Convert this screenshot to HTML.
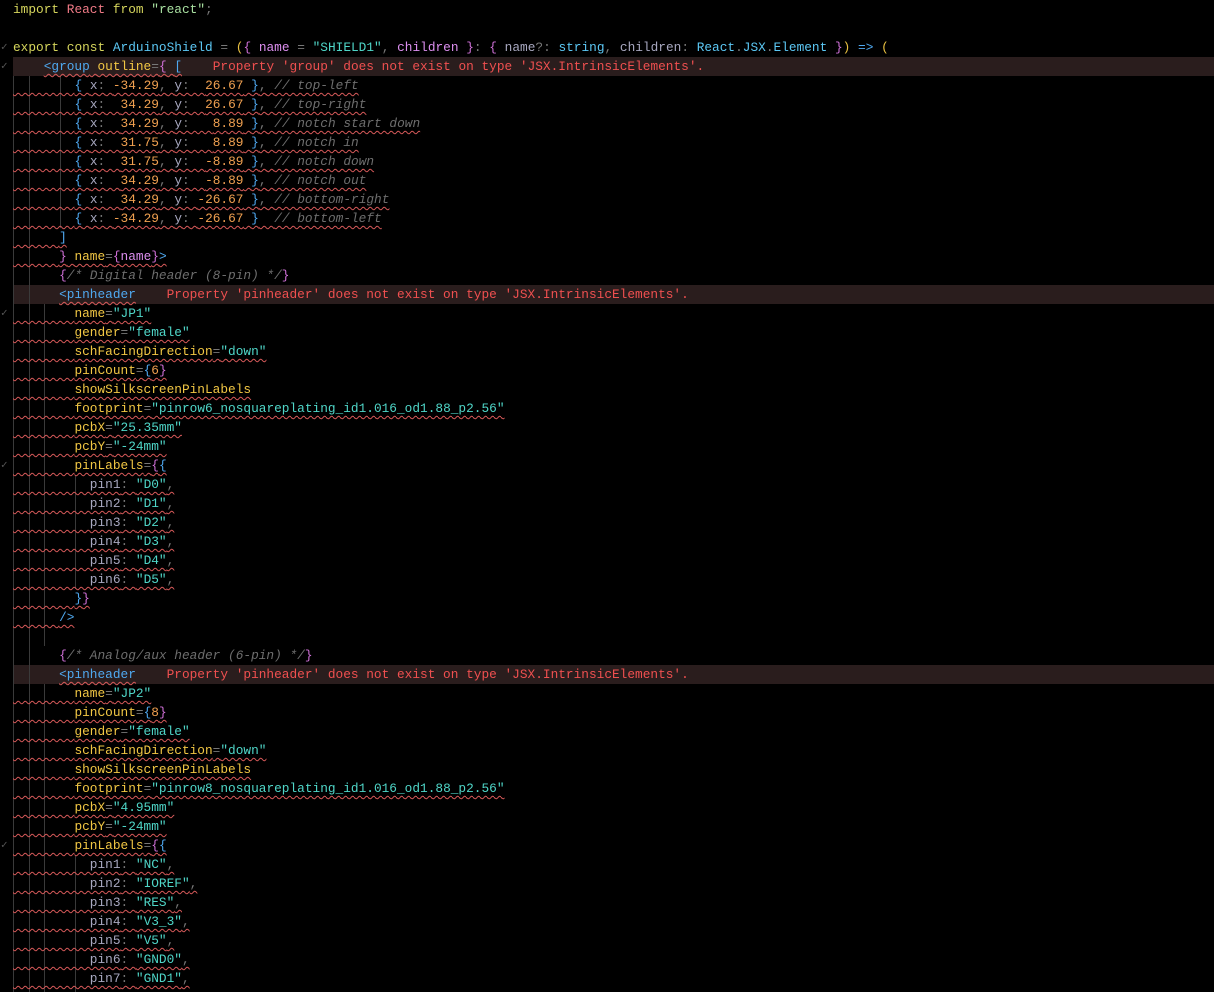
<!DOCTYPE html>
<html><head><meta charset="utf-8"><style>
html,body{margin:0;padding:0;background:#000;width:1214px;height:992px;overflow:hidden}
#ed{position:relative;width:1214px;height:992px;font-family:"Liberation Mono",monospace;font-size:12.8px;color:#d4d4d4}
.l{position:absolute;left:0;width:1214px;height:19px;line-height:20px;white-space:pre}
.l .c{position:absolute;left:13px;top:0}
.eb{position:absolute;left:13px;width:1201px;height:19px;background:#2a1d1d}
.g{position:absolute;width:1px;background:#3a3a3a}
.ck{position:absolute;left:1px;color:#555;font-size:11px}
.sq{text-decoration:underline wavy #d85a5a;text-decoration-thickness:1px;text-underline-offset:3px;text-decoration-skip-ink:none}
.k{color:#d6d65c}.r{color:#f07a86}.s{color:#4fd6c8}.s2{color:#a8e0a0}.f{color:#5cc8f5}
.p{color:#777}.y{color:#e8c040}.m{color:#d070d8}.b{color:#4fa8f0}.pa{color:#dd8ff0}
.t{color:#4fa8ef}.a{color:#f2c744}.x{color:#a8a8c0}.n{color:#f0a050}.cm{color:#6e6e6e;font-style:italic}
.e{color:#f05050}.w{color:#d4d4d4}.ty{color:#4ec9b0}
</style></head><body><div id="ed">
<div class="eb" style="top:57px"></div>
<div class="eb" style="top:285px"></div>
<div class="eb" style="top:665px"></div>
<div class="g" style="left:13px;top:76px;height:916px"></div>
<div class="g" style="left:29px;top:76px;height:916px"></div>
<div class="g" style="left:44px;top:304px;height:342px"></div>
<div class="g" style="left:44px;top:684px;height:308px"></div>
<div class="g" style="left:60px;top:76px;height:152px"></div>
<div class="g" style="left:75px;top:475px;height:114px"></div>
<div class="g" style="left:75px;top:855px;height:137px"></div>

<div class="l" style="top:0"><span class="c"><span class="k">import</span> <span class="r">React</span> <span class="k">from</span> <span class="s2">"react"</span><span class="p">;</span></span></div>
<div class="l" style="top:38px"><span class="ck">✓</span><span class="c"><span class="k">export</span> <span class="k">const</span> <span class="f">ArduinoShield</span> <span class="p">=</span> <span class="y">(</span><span class="m">{</span> <span class="pa">name</span> <span class="p">=</span> <span class="s">"SHIELD1"</span><span class="p">,</span> <span class="pa">children</span> <span class="m">}</span><span class="p">:</span> <span class="m">{</span> <span class="x">name</span><span class="p">?:</span> <span class="f">string</span><span class="p">,</span> <span class="x">children</span><span class="p">:</span> <span class="f">React</span><span class="p">.</span><span class="f">JSX</span><span class="p">.</span><span class="f">Element</span> <span class="m">}</span><span class="y">)</span> <span class="b">=&gt;</span> <span class="y">(</span></span></div>
<div class="l" style="top:57px"><span class="ck">✓</span><span class="c">    <span class="sq"><span class="t">&lt;group</span> <span class="a">outline</span><span class="p">=</span><span class="m">{</span> <span class="b">[</span></span>    <span class="e">Property 'group' does not exist on type 'JSX.IntrinsicElements'.</span></span></div>
<div class="l" style="top:76px"><span class="c sq">        <span class="b">{</span> <span class="x">x</span><span class="p">:</span> <span class="n">-34.29</span><span class="p">,</span> <span class="x">y</span><span class="p">:</span>  <span class="n">26.67</span> <span class="b">}</span><span class="p">,</span> <span class="cm">// top-left</span></span></div>
<div class="l" style="top:95px"><span class="c sq">        <span class="b">{</span> <span class="x">x</span><span class="p">:</span>  <span class="n">34.29</span><span class="p">,</span> <span class="x">y</span><span class="p">:</span>  <span class="n">26.67</span> <span class="b">}</span><span class="p">,</span> <span class="cm">// top-right</span></span></div>
<div class="l" style="top:114px"><span class="c sq">        <span class="b">{</span> <span class="x">x</span><span class="p">:</span>  <span class="n">34.29</span><span class="p">,</span> <span class="x">y</span><span class="p">:</span>   <span class="n">8.89</span> <span class="b">}</span><span class="p">,</span> <span class="cm">// notch start down</span></span></div>
<div class="l" style="top:133px"><span class="c sq">        <span class="b">{</span> <span class="x">x</span><span class="p">:</span>  <span class="n">31.75</span><span class="p">,</span> <span class="x">y</span><span class="p">:</span>   <span class="n">8.89</span> <span class="b">}</span><span class="p">,</span> <span class="cm">// notch in</span></span></div>
<div class="l" style="top:152px"><span class="c sq">        <span class="b">{</span> <span class="x">x</span><span class="p">:</span>  <span class="n">31.75</span><span class="p">,</span> <span class="x">y</span><span class="p">:</span>  <span class="n">-8.89</span> <span class="b">}</span><span class="p">,</span> <span class="cm">// notch down</span></span></div>
<div class="l" style="top:171px"><span class="c sq">        <span class="b">{</span> <span class="x">x</span><span class="p">:</span>  <span class="n">34.29</span><span class="p">,</span> <span class="x">y</span><span class="p">:</span>  <span class="n">-8.89</span> <span class="b">}</span><span class="p">,</span> <span class="cm">// notch out</span></span></div>
<div class="l" style="top:190px"><span class="c sq">        <span class="b">{</span> <span class="x">x</span><span class="p">:</span>  <span class="n">34.29</span><span class="p">,</span> <span class="x">y</span><span class="p">:</span> <span class="n">-26.67</span> <span class="b">}</span><span class="p">,</span> <span class="cm">// bottom-right</span></span></div>
<div class="l" style="top:209px"><span class="c sq">        <span class="b">{</span> <span class="x">x</span><span class="p">:</span> <span class="n">-34.29</span><span class="p">,</span> <span class="x">y</span><span class="p">:</span> <span class="n">-26.67</span> <span class="b">}</span>  <span class="cm">// bottom-left</span></span></div>
<div class="l" style="top:228px"><span class="c sq">      <span class="b">]</span></span></div>
<div class="l" style="top:247px"><span class="c sq">      <span class="m">}</span> <span class="a">name</span><span class="p">=</span><span class="m">{</span><span class="pa">name</span><span class="m">}</span><span class="t">&gt;</span></span></div>
<div class="l" style="top:266px"><span class="c">      <span class="m">{</span><span class="cm">/* Digital header (8-pin) */</span><span class="m">}</span></span></div>
<div class="l" style="top:285px"><span class="c">      <span class="sq"><span class="t">&lt;pinheader</span></span>    <span class="e">Property 'pinheader' does not exist on type 'JSX.IntrinsicElements'.</span></span></div>
<div class="l" style="top:304px"><span class="ck">✓</span><span class="c sq">        <span class="a">name</span><span class="p">=</span><span class="s">"JP1"</span></span></div>
<div class="l" style="top:323px"><span class="c sq">        <span class="a">gender</span><span class="p">=</span><span class="s">"female"</span></span></div>
<div class="l" style="top:342px"><span class="c sq">        <span class="a">schFacingDirection</span><span class="p">=</span><span class="s">"down"</span></span></div>
<div class="l" style="top:361px"><span class="c sq">        <span class="a">pinCount</span><span class="p">=</span><span class="b">{</span><span class="n">6</span><span class="m">}</span></span></div>
<div class="l" style="top:380px"><span class="c sq">        <span class="a">showSilkscreenPinLabels</span></span></div>
<div class="l" style="top:399px"><span class="c sq">        <span class="a">footprint</span><span class="p">=</span><span class="s">"pinrow6_nosquareplating_id1.016_od1.88_p2.56"</span></span></div>
<div class="l" style="top:418px"><span class="c sq">        <span class="a">pcbX</span><span class="p">=</span><span class="s">"25.35mm"</span></span></div>
<div class="l" style="top:437px"><span class="c sq">        <span class="a">pcbY</span><span class="p">=</span><span class="s">"-24mm"</span></span></div>
<div class="l" style="top:456px"><span class="ck">✓</span><span class="c sq">        <span class="a">pinLabels</span><span class="p">=</span><span class="m">{</span><span class="b">{</span></span></div>
<div class="l" style="top:475px"><span class="c sq">          <span class="x">pin1</span><span class="p">:</span> <span class="s">"D0"</span><span class="p">,</span></span></div>
<div class="l" style="top:494px"><span class="c sq">          <span class="x">pin2</span><span class="p">:</span> <span class="s">"D1"</span><span class="p">,</span></span></div>
<div class="l" style="top:513px"><span class="c sq">          <span class="x">pin3</span><span class="p">:</span> <span class="s">"D2"</span><span class="p">,</span></span></div>
<div class="l" style="top:532px"><span class="c sq">          <span class="x">pin4</span><span class="p">:</span> <span class="s">"D3"</span><span class="p">,</span></span></div>
<div class="l" style="top:551px"><span class="c sq">          <span class="x">pin5</span><span class="p">:</span> <span class="s">"D4"</span><span class="p">,</span></span></div>
<div class="l" style="top:570px"><span class="c sq">          <span class="x">pin6</span><span class="p">:</span> <span class="s">"D5"</span><span class="p">,</span></span></div>
<div class="l" style="top:589px"><span class="c sq">        <span class="b">}</span><span class="m">}</span></span></div>
<div class="l" style="top:608px"><span class="c sq">      <span class="t">/&gt;</span></span></div>
<div class="l" style="top:646px"><span class="c">      <span class="m">{</span><span class="cm">/* Analog/aux header (6-pin) */</span><span class="m">}</span></span></div>
<div class="l" style="top:665px"><span class="c">      <span class="sq"><span class="t">&lt;pinheader</span></span>    <span class="e">Property 'pinheader' does not exist on type 'JSX.IntrinsicElements'.</span></span></div>
<div class="l" style="top:684px"><span class="c sq">        <span class="a">name</span><span class="p">=</span><span class="s">"JP2"</span></span></div>
<div class="l" style="top:703px"><span class="c sq">        <span class="a">pinCount</span><span class="p">=</span><span class="b">{</span><span class="n">8</span><span class="m">}</span></span></div>
<div class="l" style="top:722px"><span class="c sq">        <span class="a">gender</span><span class="p">=</span><span class="s">"female"</span></span></div>
<div class="l" style="top:741px"><span class="c sq">        <span class="a">schFacingDirection</span><span class="p">=</span><span class="s">"down"</span></span></div>
<div class="l" style="top:760px"><span class="c sq">        <span class="a">showSilkscreenPinLabels</span></span></div>
<div class="l" style="top:779px"><span class="c sq">        <span class="a">footprint</span><span class="p">=</span><span class="s">"pinrow8_nosquareplating_id1.016_od1.88_p2.56"</span></span></div>
<div class="l" style="top:798px"><span class="c sq">        <span class="a">pcbX</span><span class="p">=</span><span class="s">"4.95mm"</span></span></div>
<div class="l" style="top:817px"><span class="c sq">        <span class="a">pcbY</span><span class="p">=</span><span class="s">"-24mm"</span></span></div>
<div class="l" style="top:836px"><span class="ck">✓</span><span class="c sq">        <span class="a">pinLabels</span><span class="p">=</span><span class="m">{</span><span class="b">{</span></span></div>
<div class="l" style="top:855px"><span class="c sq">          <span class="x">pin1</span><span class="p">:</span> <span class="s">"NC"</span><span class="p">,</span></span></div>
<div class="l" style="top:874px"><span class="c sq">          <span class="x">pin2</span><span class="p">:</span> <span class="s">"IOREF"</span><span class="p">,</span></span></div>
<div class="l" style="top:893px"><span class="c sq">          <span class="x">pin3</span><span class="p">:</span> <span class="s">"RES"</span><span class="p">,</span></span></div>
<div class="l" style="top:912px"><span class="c sq">          <span class="x">pin4</span><span class="p">:</span> <span class="s">"V3_3"</span><span class="p">,</span></span></div>
<div class="l" style="top:931px"><span class="c sq">          <span class="x">pin5</span><span class="p">:</span> <span class="s">"V5"</span><span class="p">,</span></span></div>
<div class="l" style="top:950px"><span class="c sq">          <span class="x">pin6</span><span class="p">:</span> <span class="s">"GND0"</span><span class="p">,</span></span></div>
<div class="l" style="top:969px"><span class="c sq">          <span class="x">pin7</span><span class="p">:</span> <span class="s">"GND1"</span><span class="p">,</span></span></div>
</div></body></html>
